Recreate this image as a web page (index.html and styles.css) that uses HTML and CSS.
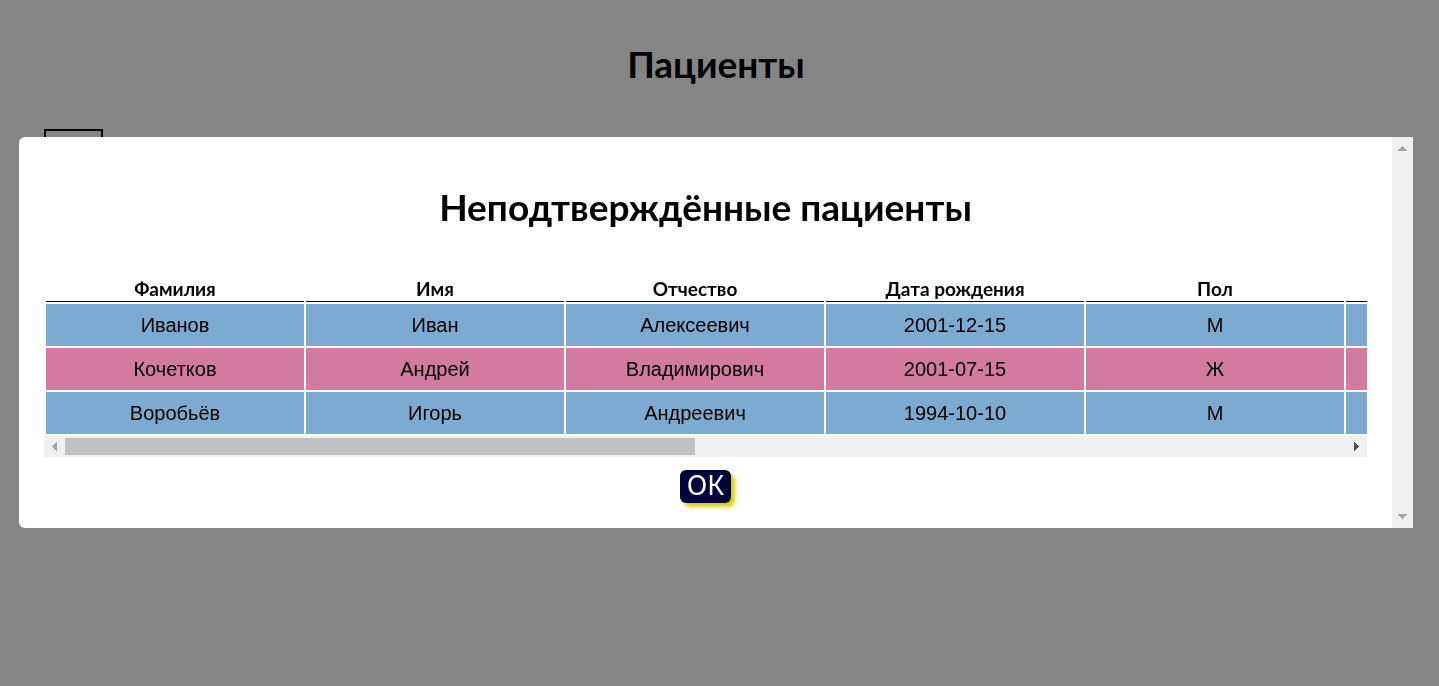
FILE: index.html
```html
<!DOCTYPE html>
<html lang="ru">
<head>
<meta charset="utf-8">
<title>Пациенты</title>
<link rel="stylesheet" href="styles.css">
</head>
<body>
<main class="page">
  <h1 class="title">Пациенты</h1>
  <button class="page-button" type="button" aria-label="Назад"></button>
</main>
<div class="overlay">
  <section class="modal" role="dialog" aria-labelledby="modal-title">
    <div class="modal-body">
      <h2 class="title" id="modal-title">Неподтверждённые пациенты</h2>
      <div class="table-wrap">
        <table class="patients">
          <thead>
            <tr><th>Фамилия</th><th>Имя</th><th>Отчество</th><th>Дата рождения</th><th>Пол</th><th></th></tr>
          </thead>
          <tbody>
            <tr class="male"><td>Иванов</td><td>Иван</td><td>Алексеевич</td><td>2001-12-15</td><td>М</td><td></td></tr>
            <tr class="female"><td>Кочетков</td><td>Андрей</td><td>Владимирович</td><td>2001-07-15</td><td>Ж</td><td></td></tr>
            <tr class="male"><td>Воробьёв</td><td>Игорь</td><td>Андреевич</td><td>1994-10-10</td><td>М</td><td></td></tr>
          </tbody>
        </table>
      </div>
      <div class="scroll-x">
        <svg class="arrow" viewBox="0 0 21 21" shape-rendering="crispEdges"><path d="M13 6v9L8 10.500z" fill="#a3a3a3"/></svg>
        <div class="track"><div class="thumb"></div></div>
        <svg class="arrow" viewBox="0 0 21 21" shape-rendering="crispEdges"><path d="M8 6v9l5-4.500z" fill="#505050"/></svg>
      </div>
      <button class="ok" type="button">ОК</button>
    </div>
    <div class="scroll-y">
      <svg class="arrow" viewBox="0 0 21 21" shape-rendering="crispEdges"><path d="M6 14h9l-4.500-5z" fill="#a3a3a3"/></svg>
      <svg class="arrow" viewBox="0 0 21 21" shape-rendering="crispEdges"><path d="M6 7h9l-4.500 5z" fill="#a3a3a3"/></svg>
    </div>
  </section>
</div>
</body>
</html>
```
FILE: styles.css
```css
* {
  box-sizing: border-box;
}

body {
  margin: 0;
  background: #858585;
  color: #000;
  font-family: "Liberation Sans", Arial, sans-serif;
}

.page {
  padding: 40px 51px 0 44px;
}

.title {
  margin: 0;
  font: bold 37px/48px Lato, "Noto Sans", sans-serif;
  text-align: center;
}

.page-button {
  display: block;
  width: 59px;
  height: 42px;
  margin-top: 41px;
  border: 2px solid #000;
  background: transparent;
}

.overlay {
  position: fixed;
  inset: 0;
  padding: 137px 26px 0 19px;
}

.modal {
  display: flex;
  overflow: hidden;
  border-radius: 6px 0 0 6px;
  background: #fff;
}

.modal-body {
  flex: 1;
  display: flex;
  flex-direction: column;
  min-width: 0;
  padding: 46px 25px 25px;
}

.table-wrap {
  overflow: hidden;
  margin-top: 43px;
}

.patients {
  width: 1562px;
  table-layout: fixed;
  border-spacing: 2px;
}

.patients th {
  height: 26px;
  padding: 0;
  border-bottom: 1px solid #000;
  font: bold 19px/24px Lato, "Noto Sans", sans-serif;
}

.patients td {
  height: 42px;
  padding: 0;
  font-size: 20px;
  text-align: center;
}

.male {
  background: #7caad1;
}

.female {
  background: #d27b9f;
}

.scroll-x {
  display: flex;
  height: 21px;
  background: #f0f0f0;
}

.arrow {
  flex: none;
  width: 21px;
  height: 21px;
}

.track {
  flex: 1;
  padding: 2px 0;
}

.thumb {
  width: 49.200%;
  height: 17px;
  background: #c1c1c1;
}

.ok {
  align-self: center;
  height: 33px;
  margin-top: 13px;
  padding: 0 7px 4px;
  border: 0;
  border-radius: 6px;
  background: #04043c;
  box-shadow: 4px 4px 4px #d2d20a;
  color: #fff;
  font: 27px/29px "Noto Sans", sans-serif;
}

.scroll-y {
  display: flex;
  flex-direction: column;
  justify-content: space-between;
  background: #f0f0f0;
}
```
